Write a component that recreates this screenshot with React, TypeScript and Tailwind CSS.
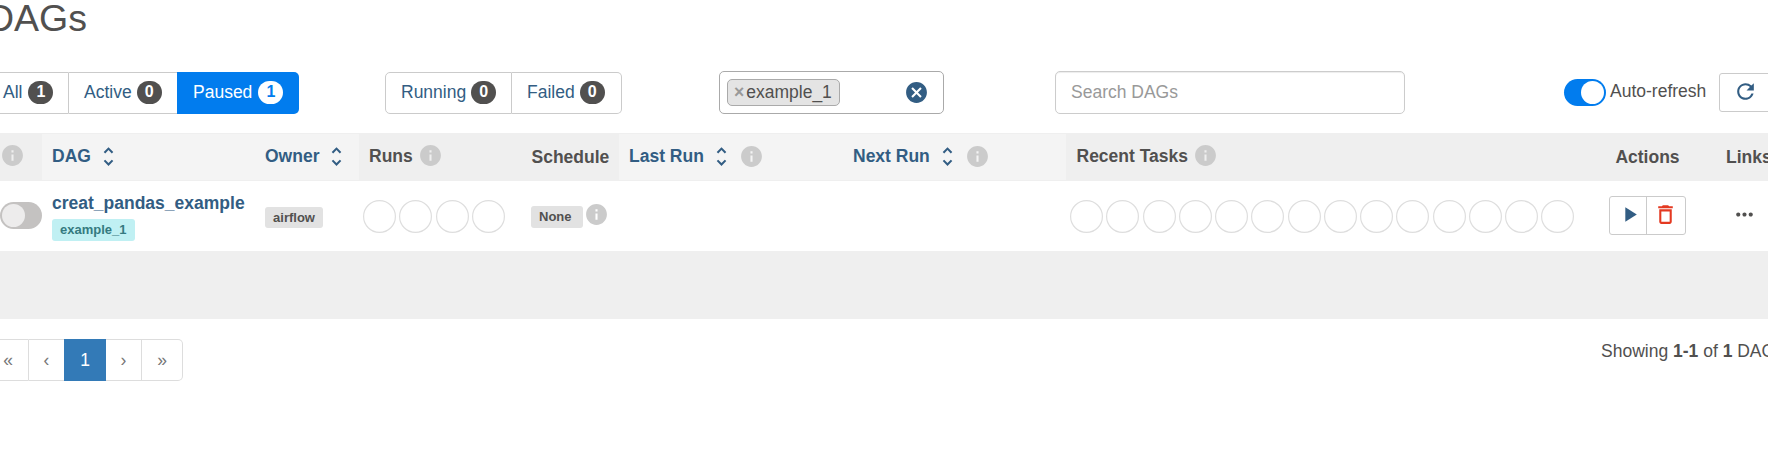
import React from "react";
import {
  MdCancel,
  MdDeleteOutline,
  MdInfo,
  MdMoreHoriz,
  MdPlayArrow,
  MdRefresh,
  MdUnfoldMore,
} from "react-icons/md";

function Count({ value, inverted = false }: { value: number; inverted?: boolean }) {
  return (
    <span
      className={
        inverted
          ? "-mt-px flex h-[23px] w-[25px] items-center justify-center rounded-full bg-white text-base font-bold text-[#017cee]"
          : "-mt-px flex h-[23px] w-[25px] items-center justify-center rounded-full bg-[#51504f] text-base font-bold text-white"
      }
    >
      {value}
    </span>
  );
}

function SortHeader({ label, info = false }: { label: string; info?: boolean }) {
  return (
    <div className="my-px flex items-center bg-[#f4f4f4] pl-2.5 pb-0.5 text-[#325d83]">
      <span>{label}</span>
      <MdUnfoldMore className="ml-[5px] size-[25px] shrink-0" />
      {info && <MdInfo className="ml-[5px] size-[25px] shrink-0 text-[#cbcbcb]" />}
    </div>
  );
}

function Circles({ count }: { count: number }) {
  return (
    <div className="flex gap-[3.25px]">
      {Array.from({ length: count }, (_, i) => (
        <svg key={i} className="size-[33px] shrink-0" viewBox="0 0 33 33">
          <circle cx="16.5" cy="16.5" r="15.9" fill="none" stroke="#dedede" strokeWidth="1.2" />
        </svg>
      ))}
    </div>
  );
}

const columns =
  "grid grid-cols-[55px_213px_104px_162px_98px_224px_223px_528px_107px_100px]";

export default function App() {
  return (
    <div className="h-[460px] w-[1768px] overflow-hidden bg-white font-['Liberation_Sans',Arial,sans-serif] text-[17.5px] leading-[25px] text-[#51504f]">
      <main className="-ml-[13px] w-[1794px]">
        <h2 className="h-[71px] text-[37.5px] leading-[37px]">DAGs</h2>

        <div className="flex h-[62px] items-start">
          <div className="mt-px flex h-[42px] w-[312px] text-[#325d83]">
            <button className="flex w-[82px] items-center gap-1.5 rounded-l-[5px] border border-[#cbcbcb] pb-px pl-[15px]">
              All <Count value={1} />
            </button>
            <button className="flex w-[108px] items-center gap-[5px] border-y border-[#cbcbcb] pb-px pl-[15px]">
              Active <Count value={0} />
            </button>
            <button className="flex w-[122px] items-center gap-1.5 rounded-r-[5px] bg-[#017cee] pb-px pl-4 text-white">
              Paused <Count value={1} inverted />
            </button>
          </div>

          <div className="mt-px ml-[86px] flex h-[42px] w-[237px] text-[#325d83]">
            <button className="flex w-[127px] items-center gap-[5px] rounded-l-[5px] border border-[#cbcbcb] pb-px pl-[15px]">
              Running <Count value={0} />
            </button>
            <button className="flex w-[110px] items-center gap-[5px] rounded-r-[5px] border border-l-0 border-[#cbcbcb] pb-px pl-[15px]">
              Failed <Count value={0} />
            </button>
          </div>

          <div className="ml-[97px] flex h-[43px] w-[225px] items-center justify-between rounded-[5px] border border-[#aaa] pr-3.5 pl-[7px]">
            <span className="flex h-[27px] w-[113px] items-center rounded-[5px] border border-[#aaa] bg-[#e4e4e4] pl-1.5">
              <span className="mr-[2px] text-[17.5px] font-bold text-[#999]">×</span>
              <span>example_1</span>
            </span>
            <MdCancel className="size-[25px] text-[#325d83]" />
          </div>

          <input
            className="ml-[111px] h-[43px] w-[350px] rounded-[5px] border border-[#ccc] pb-px pl-[15px] shadow-[inset_0_1px_1px_rgba(0,0,0,0.075)] placeholder:text-[#999]"
            placeholder="Search DAGs"
          />

          <div className="mt-2 ml-[159px] flex h-[27px] w-[42px] justify-end rounded-full bg-[#017cee] p-[2px]">
            <span className="size-[23px] rounded-full bg-white" />
          </div>
          <span className="mt-2 ml-1 w-[109px]">Auto-refresh</span>
          <button className="mt-0.5 flex h-[39px] w-[54px] items-center rounded-[3px] border border-[#cbcbcb] pb-0.5 pl-[13px]">
            <MdRefresh className="size-[25px] text-[#325d83]" />
          </button>
        </div>

        <div className={`${columns} h-12 bg-[#efefef] font-bold`}>
          <div className="flex items-center pb-[3px] pl-[12.5px]">
            <MdInfo className="size-[25px] text-[#cbcbcb]" />
          </div>
          <SortHeader label="DAG" />
          <SortHeader label="Owner" />
          <div className="flex items-center gap-[5px] pb-0.5 pl-2.5">
            Runs <MdInfo className="-mt-px size-[25px] text-[#cbcbcb]" />
          </div>
          <div className="flex items-center pl-[10.5px]">Schedule</div>
          <SortHeader label="Last Run" info />
          <SortHeader label="Next Run" info />
          <div className="flex items-center gap-[4.5px] pb-0.5 pl-[10.5px]">
            Recent Tasks <MdInfo className="-mt-px size-[25px] text-[#cbcbcb]" />
          </div>
          <div className="flex items-center justify-center">Actions</div>
          <div className="flex items-center pl-[25px]">Links</div>
        </div>

        <div className={`${columns} h-[70px]`}>
          <div className="pt-[21px] pl-[13px]">
            <div className="flex h-[27px] w-[42px] rounded-full bg-[#c4c2c1] p-[2px]">
              <span className="size-[23px] rounded-full bg-[#edecec]" />
            </div>
          </div>
          <div className="flex flex-col items-start pt-2.5 pl-2.5">
            <a className="font-bold text-[#325d83]">creat_pandas_example</a>
            <span className="mt-[3px] flex h-[22px] items-center rounded-[3px] bg-[#c0f0f3] px-2 pb-0.5 text-[13px] font-bold text-[#357a80]">
              example_1
            </span>
          </div>
          <div className="pt-[26px] pl-2.5">
            <span className="flex h-[21px] w-[58px] items-center justify-center rounded-[3px] bg-[#e2e2e2] pb-px text-[13px] font-bold">
              airflow
            </span>
          </div>
          <div className="pt-[18.5px] pl-1">
            <Circles count={4} />
          </div>
          <div className="flex items-start pt-[21px] pl-2.5">
            <span className="mt-1 flex h-[22px] w-[52px] shrink-0 items-center rounded-[3px] bg-[#e2e2e2] pb-0.5 pl-2 text-[13px] font-bold">
              None
            </span>
            <MdInfo className="ml-px size-[25px] shrink-0 text-[#cbcbcb]" />
          </div>
          <div />
          <div />
          <div className="pt-[18.5px] pl-1">
            <Circles count={14} />
          </div>
          <div className="flex justify-center pt-[15px]">
            <div className="flex h-[39px] w-[77px] rounded-[3px] border border-[#cbcbcb] pb-px">
              <button className="-mb-px flex w-[37px] items-center justify-center border-r border-[#cbcbcb] pb-0.5 pl-0.5">
                <MdPlayArrow className="size-[25px] text-[#325d83]" />
              </button>
              <button className="flex flex-1 items-center justify-center pr-px pb-px">
                <MdDeleteOutline className="size-[25px] text-[#e43921]" />
              </button>
            </div>
          </div>
          <div className="pt-[21px] pl-[30.5px]">
            <MdMoreHoriz className="size-[25px]" />
          </div>
        </div>

        <div className="h-[68px] bg-[#efefef]" />

        <div className="flex items-start justify-between pt-5">
          <nav className="flex h-[42px] text-[17.5px] text-[#777]">
            <a className="flex w-[42px] items-center justify-center rounded-l-[5px] border border-[#ddd]">«</a>
            <a className="flex w-[35px] items-center justify-center border-y border-[#ddd]">‹</a>
            <a className="flex w-[42px] items-center justify-center bg-[#337ab7] text-white">1</a>
            <a className="flex w-9 items-center justify-center border-y border-r border-[#ddd]">›</a>
            <a className="flex w-[41px] items-center justify-center rounded-r-[5px] border-y border-r border-[#ddd]">»</a>
          </nav>
          <p className="w-[180px] whitespace-nowrap">
            Showing <strong>1-1</strong> of <strong>1</strong> DAGs
          </p>
        </div>
      </main>
    </div>
  );
}
